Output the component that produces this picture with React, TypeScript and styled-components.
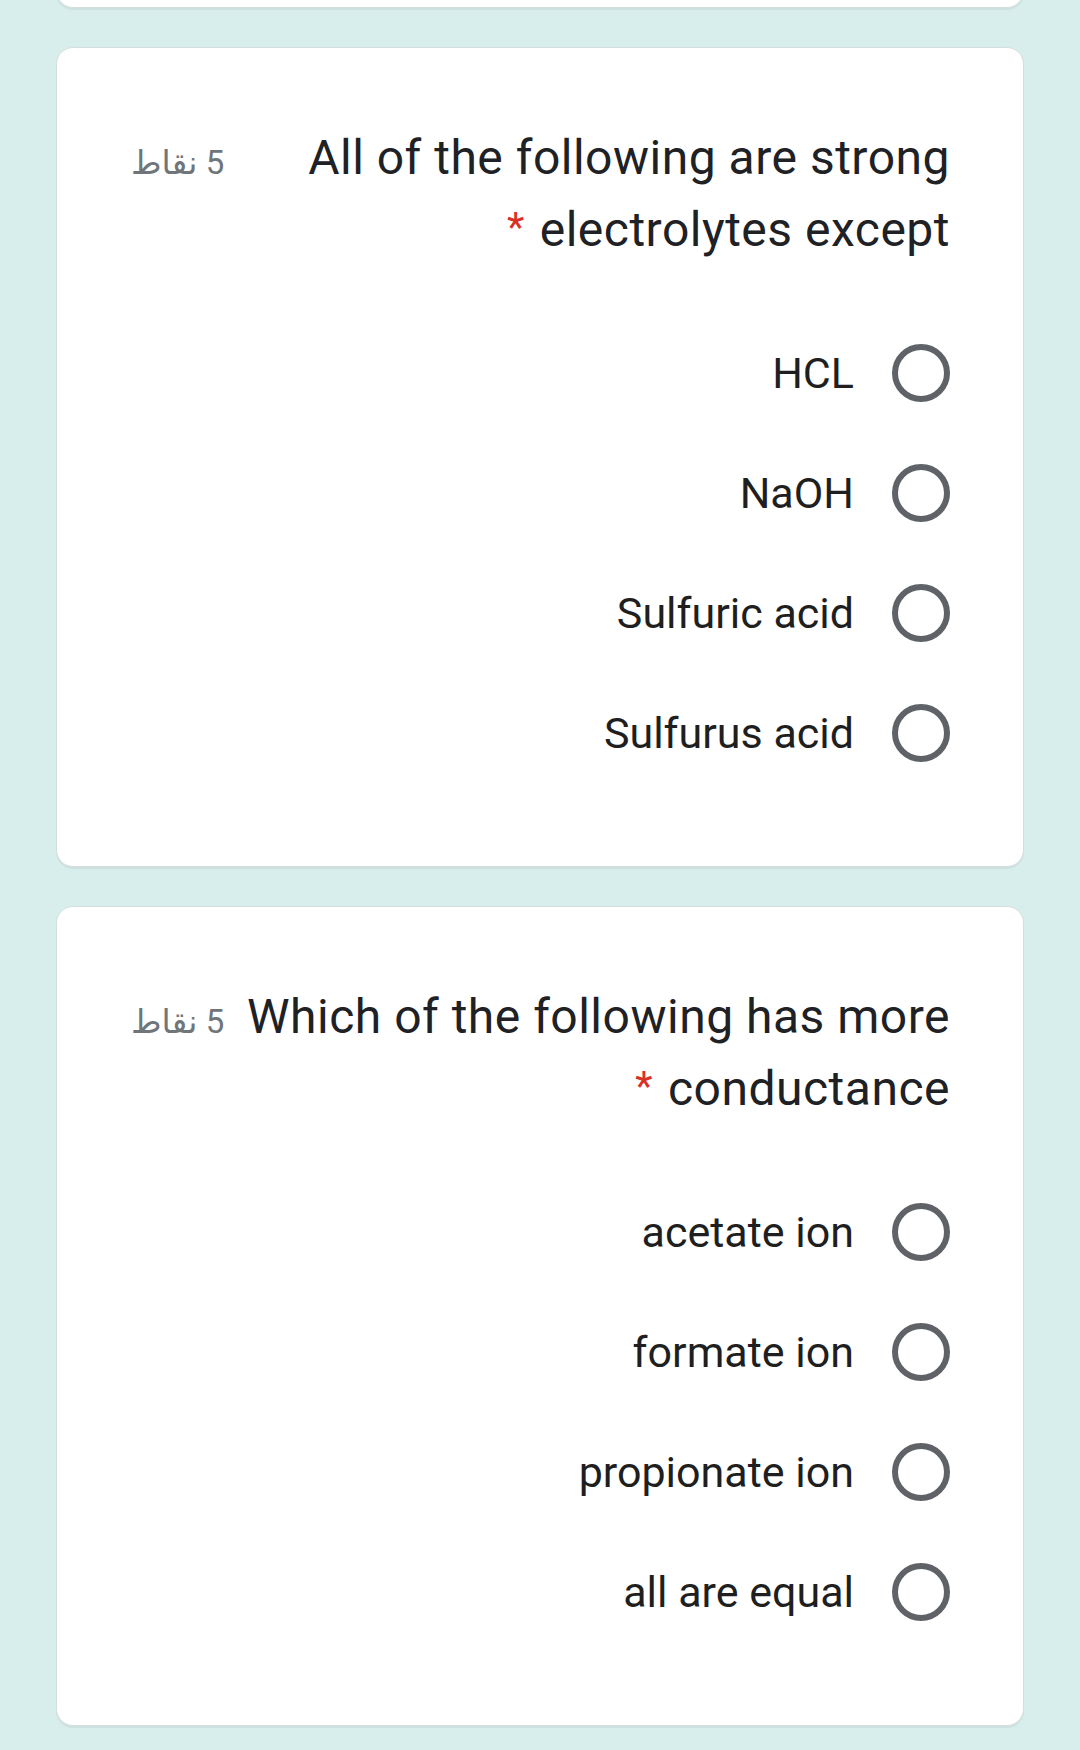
import React from "react";
import styled, { createGlobalStyle } from "styled-components";

const GlobalStyle = createGlobalStyle`
  html, body {
    margin: 0;
    padding: 0;
    background: #d8eeec;
  }
  body {
    min-height: 1750px;
    overflow: hidden;
    font-family: Roboto, "Noto Sans", "DejaVu Sans", sans-serif;
  }
`;

const Page = styled.main`
  display: flex;
  flex-direction: column;
  gap: 39px;
  padding: 0 56px;
`;

const Card = styled.section<{ $stub?: boolean }>`
  box-sizing: border-box;
  background: #ffffff;
  border: 1px solid #d6dddd;
  border-radius: 17px;
  box-shadow: 0 2px 1px rgba(0, 0, 0, 0.05);
  padding: ${(p) => (p.$stub ? "0" : "74px 73px 73px 74px")};
  height: ${(p) => (p.$stub ? "100px" : "auto")};
  margin-top: ${(p) => (p.$stub ? "-92px" : "0")};
`;

const Header = styled.div`
  display: flex;
  align-items: baseline;
  justify-content: space-between;
  gap: 16px;
`;

const Points = styled.span`
  direction: rtl;
  flex: none;
  font-family: Roboto, "DejaVu Sans", "Noto Sans", sans-serif;
  font-size: 33px;
  line-height: 72px;
  color: #70757a;
`;

const Title = styled.h2`
  flex: none;
  margin: 0;
  text-align: right;
  white-space: nowrap;
  font-family: Roboto, "Noto Sans", sans-serif;
  font-weight: 400;
  font-size: 48px;
  letter-spacing: 0.5px;
  line-height: 72px;
  color: #202124;
`;

const Required = styled.span`
  color: #d93025;
  font-size: 40px;
  line-height: 0;
  vertical-align: 5px;
  margin-right: 15px;
`;

const Options = styled.div`
  display: flex;
  flex-direction: column;
  margin-top: 47px;
`;

const OptionRow = styled.label`
  display: flex;
  align-items: center;
  justify-content: flex-end;
  gap: 38px;
  height: 120px;
`;

const OptionText = styled.span`
  font-family: Roboto, "Noto Sans", sans-serif;
  font-size: 43px;
  color: #1f1f1f;
`;

const Radio = styled.span`
  box-sizing: border-box;
  flex: none;
  width: 58px;
  height: 58px;
  border-radius: 50%;
  border: 6px solid #5f6368;
`;

type Question = {
  points: string;
  lines: [string, string];
  options: string[];
};

const questions: Question[] = [
  {
    points: "5 نقاط",
    lines: ["All of the following are strong", "electrolytes except"],
    options: ["HCL", "NaOH", "Sulfuric acid", "Sulfurus acid"],
  },
  {
    points: "5 نقاط",
    lines: ["Which of the following has more", "conductance"],
    options: ["acetate ion", "formate ion", "propionate ion", "all are equal"],
  },
];

function QuestionCard({ q }: { q: Question }) {
  return (
    <Card>
      <Header>
        <Points>{q.points}</Points>
        <Title>
          {q.lines[0]}
          <br />
          <Required>*</Required>
          {q.lines[1]}
        </Title>
      </Header>
      <Options>
        {q.options.map((o) => (
          <OptionRow key={o}>
            <OptionText>{o}</OptionText>
            <Radio />
          </OptionRow>
        ))}
      </Options>
    </Card>
  );
}

export default function App() {
  return (
    <>
      <GlobalStyle />
      <Page>
        <Card $stub />
        {questions.map((q) => (
          <QuestionCard key={q.lines[0]} q={q} />
        ))}
      </Page>
    </>
  );
}
